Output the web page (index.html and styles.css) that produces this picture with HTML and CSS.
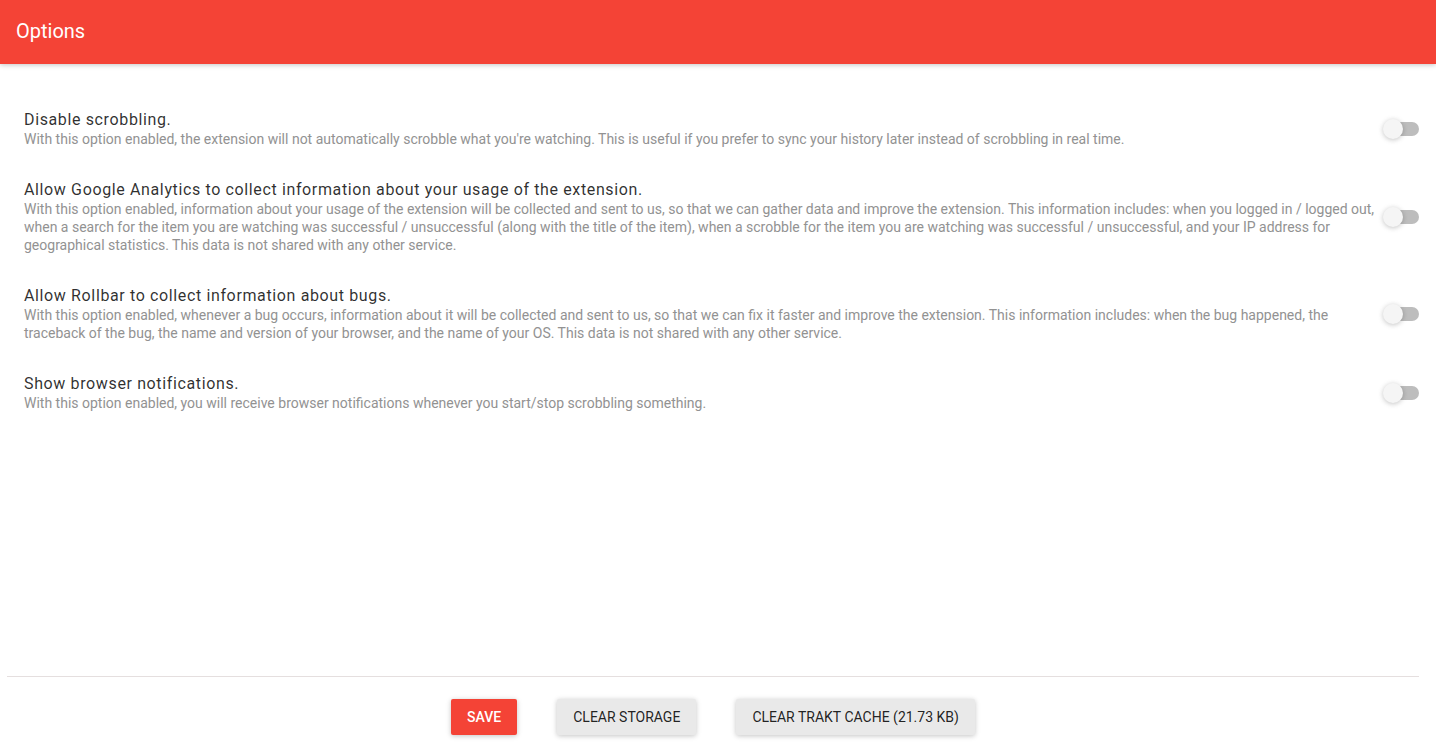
FILE: index.html
```html
<!DOCTYPE html>
<html lang="en">
<head>
    <meta charset="UTF-8">
    <title>Options</title>
    <link rel="stylesheet" href="styles.css">
</head>
<body>
    <div class="app">
        <header class="app-bar">
            <h1 class="app-title">Options</h1>
        </header>

        <div class="options">
            <div class="option">
                <div class="option-text">
                    <div class="option-title">Disable scrobbling.</div>
                    <div class="option-desc">With this option enabled, the extension will not automatically scrobble what you're watching. This is useful if you prefer to sync your history later instead of scrobbling in real time.</div>
                </div>
                <div class="toggle"><span class="toggle-track"></span><span class="toggle-knob"></span></div>
            </div>

            <div class="option">
                <div class="option-text">
                    <div class="option-title">Allow Google Analytics to collect information about your usage of the extension.</div>
                    <div class="option-desc">With this option enabled, information about your usage of the extension will be collected and sent to us, so that we can gather data and improve the extension. This information includes: when you logged in / logged out, when a search for the item you are watching was successful / unsuccessful (along with the title of the item), when a scrobble for the item you are watching was successful / unsuccessful, and your IP address for geographical statistics. This data is not shared with any other service.</div>
                </div>
                <div class="toggle"><span class="toggle-track"></span><span class="toggle-knob"></span></div>
            </div>

            <div class="option">
                <div class="option-text">
                    <div class="option-title">Allow Rollbar to collect information about bugs.</div>
                    <div class="option-desc">With this option enabled, whenever a bug occurs, information about it will be collected and sent to us, so that we can fix it faster and improve the extension. This information includes: when the bug happened, the traceback of the bug, the name and version of your browser, and the name of your OS. This data is not shared with any other service.</div>
                </div>
                <div class="toggle"><span class="toggle-track"></span><span class="toggle-knob"></span></div>
            </div>

            <div class="option">
                <div class="option-text">
                    <div class="option-title">Show browser notifications.</div>
                    <div class="option-desc">With this option enabled, you will receive browser notifications whenever you start/stop scrobbling something.</div>
                </div>
                <div class="toggle"><span class="toggle-track"></span><span class="toggle-knob"></span></div>
            </div>
        </div>

        <div class="footer">
            <div class="actions">
                <button class="btn btn-primary">Save</button>
                <button class="btn">Clear storage</button>
                <button class="btn">Clear Trakt cache (21.73 KB)</button>
            </div>
        </div>
    </div>
</body>
</html>
```

FILE: styles.css
```css
body, html {
    margin: 0;
    padding: 0;
    height: 100%;
    font-family: Roboto, "Liberation Sans", sans-serif;
    background-color: #fff;
}
.app {
    display: flex;
    flex-direction: column;
    height: 100vh;
}
.app-bar {
    background-color: #f44336;
    height: 64px;
    display: flex;
    align-items: center;
    padding: 0 16px;
    box-shadow: 0 1px 6px rgba(0, 0, 0, 0.12), 0 1px 4px rgba(0, 0, 0, 0.12);
    position: relative;
    z-index: 1;
}
.app-title {
    margin: 0 0 2px;
    color: #fff;
    font-size: 20px;
    font-weight: 400;
}
.options {
    flex: 1;
    padding: 30px 0 0 8px;
}
.option {
    display: flex;
    align-items: center;
    padding: 16px 0 16px 16px;
}
.option-text {
    flex: 1;
}
.option-title {
    font-size: 16px;
    line-height: 20px;
    letter-spacing: 0.63px;
    color: rgba(0, 0, 0, 0.82);
}
.option-desc {
    font-size: 14px;
    line-height: 18px;
    color: #929292;
}
.toggle {
    position: relative;
    width: 36px;
    height: 20px;
    margin-right: 17px;
    flex-shrink: 0;
}
.toggle-track {
    position: absolute;
    left: 2px;
    right: 0;
    top: 3px;
    height: 14px;
    border-radius: 7px;
    background-color: #bdbdbd;
}
.toggle-knob {
    position: absolute;
    left: 0;
    top: 0;
    width: 20px;
    height: 20px;
    border-radius: 50%;
    background-color: #f5f5f5;
    box-shadow: 0 1px 6px rgba(0, 0, 0, 0.12), 0 1px 4px rgba(0, 0, 0, 0.12);
}
.footer {
    margin: 0 17px 0 7px;
    border-top: 1px solid #e5dfdf;
    padding: 22px 0 19px;
}
.actions {
    display: flex;
    justify-content: center;
    gap: 40px;
}
.btn {
    height: 36px;
    padding: 0 16px;
    border: none;
    border-radius: 2px;
    background-color: #e9e9e9;
    color: rgba(0, 0, 0, 0.87);
    font-family: Roboto, "Liberation Sans", sans-serif;
    font-size: 14px;
    font-weight: 400;
    text-transform: uppercase;
    box-shadow: 0 1px 6px rgba(0, 0, 0, 0.12), 0 1px 4px rgba(0, 0, 0, 0.12);
    cursor: pointer;
}
.btn-primary {
    background-color: #f44336;
    color: #fff;
    font-weight: 500;
}
```
